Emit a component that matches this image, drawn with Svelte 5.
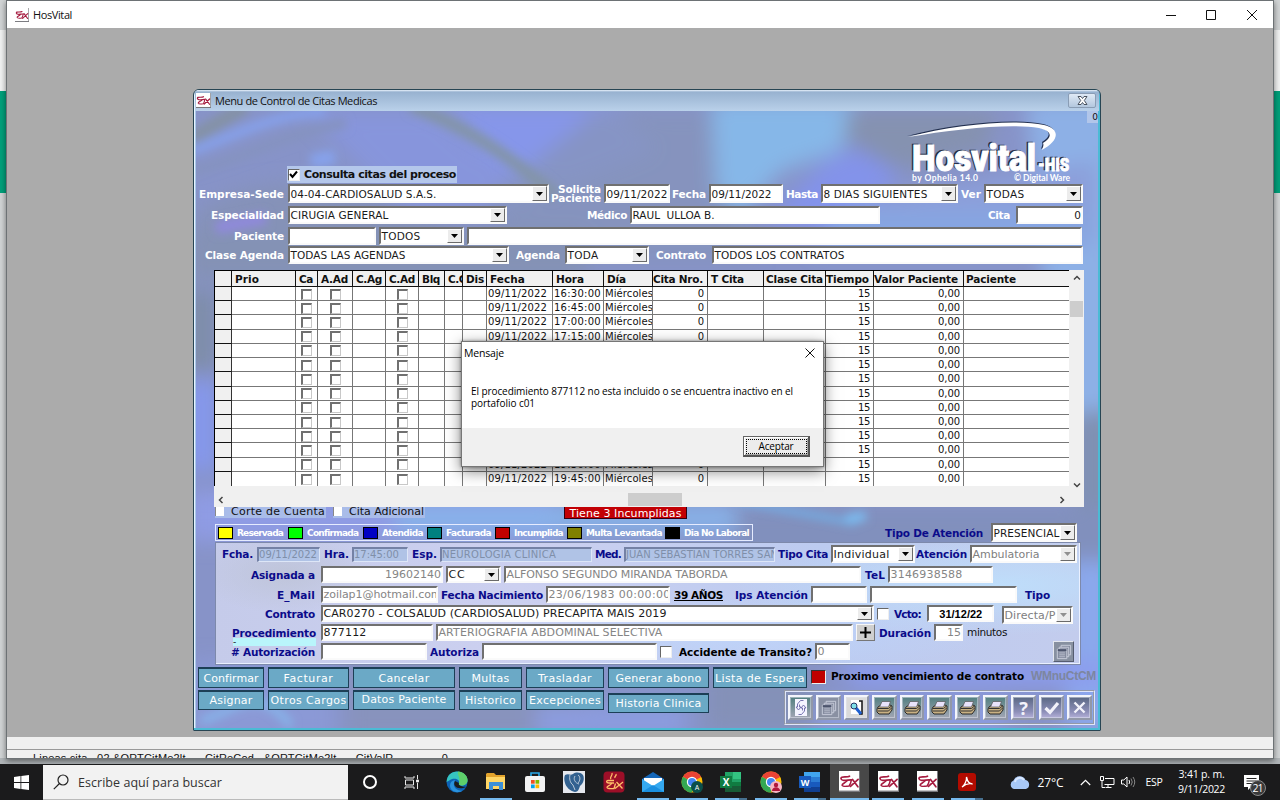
<script>
  // Spreads the letters of a label so that it occupies the given width.
  function fit(node, width) {
    if (!width) return;
    const natural = node.getBoundingClientRect().width;
    const count = node.textContent.length;
    if (count) node.style.letterSpacing = (width - natural) / count + 'px';
  }

  const times = Array.from({ length: 14 }, (_, i) => {
    const m = 16 * 60 + 30 + i * 15;
    return Math.floor(m / 60) + ':' + String(m % 60).padStart(2, '0') + ':00';
  });
  const heads = [['', 0], ['Prio', 24], ['Ca', 14], ['A.Ad', 27], ['C.Ag', 26], ['C.Ad', 26], ['Blq', 18], ['C.C', 18], ['Dis', 18], ['Fecha', 35], ['Hora', 28], ['Día', 19], ['Cita Nro.', 50], ['T Cita', 33], ['Clase Cita', 57], ['Tiempo', 43], ['Valor Paciente', 84], ['Paciente', 50]];
  const legend = [['Reservada', '#ffff00', 46, 'reservada'], ['Confirmada', '#00ff00', 51, 'confirmada'], ['Atendida', '#0000c4', 41, 'atendida'], ['Facturada', '#008080', 45, 'facturada'], ['Incumplida', '#c00000', 49, 'incumplida'], ['Multa Levantada', '#808000', 76, 'multa'], ['Dia No Laboral', '#000000', 65, 'festivo']];
  const top = [['Confirmar', 55], ['Facturar', 50], ['Cancelar', 51], ['Multas', 38], ['Trasladar', 54], ['Generar abono', 86], ['Lista de Espera', 90]];
  const bottom = [['Asignar', 43], ['Otros Cargos', 76], ['Datos Paciente', 85], ['Historico', 51], ['Excepciones', 72], ['Historia Clinica', 86]];
  const tools = ['refresh', 'copy', 'find', 'print', 'print', 'print', 'print', 'print', 'help', 'ok', 'no'];
  const apps = ['edge', 'folder', 'store', 'pg', 'gxred', 'mail', 'chromeA', 'excel', 'chromeP', 'word', 'gx', 'gx', 'gx', 'pdf'];
  const running = [0, 1, 0, 0, 0, 1, 1, 2, 1, 2, 1, 1, 1, 2];
</script>

{#snippet t(text, w)}<span class="t" use:fit={w}>{text}</span>{/snippet}
{#snippet label(text, w, cls = '')}<div class="label {cls}">{@render t(text, w)}</div>{/snippet}
{#snippet field(text, w, cls = '')}<div class="field {cls}">{@render t(text, w)}</div>{/snippet}
{#snippet combo(text, w, cls = '')}
  <div class="field combo {cls}">{@render t(text, w)}<span class="drop"><svg width="7" height="4"><path d="M0 0h7L3.5 4z" fill="currentColor" /></svg></span></div>
{/snippet}
{#snippet gx(size)}
  <svg width={size} height={size} viewBox="0 0 22 22">
    <rect width="22" height="22" fill="#77777c" /><rect width="21" height="20.5" fill="#fff" />
    <g fill="none" stroke="#a61c40" stroke-linejoin="round" stroke-linecap="round">
      <path d="M11 5.500C9 6.800 5 5.800 3 6.500 1.300 7.200 2 9.700 5 9.900c3 .2 5-.6 8-.5" stroke-width="1.800" />
      <path d="M8.500 10.300C6.500 12.500 3 13.300 3.200 14.900c.3 1.500 4.300 1.300 7.300.9 1.500-1.500 2-3.500 2.400-6.200" stroke-width="1.600" />
      <path d="M14.200 8.800l5.600 7.700M20 8.800l-8 7.400" stroke-width="1.800" />
    </g>
  </svg>
{/snippet}
{#snippet copy()}
  <svg width="20" height="20" viewBox="0 0 20 20">
    <g fill="#858c9f" stroke="#c9cddb" stroke-width="1"><path d="M7.500 3.500h10v10h-10z" /><path d="M5.500 5.500h10v10h-10z" /><path d="M3.500 7.500h10v10h-10z" /></g>
    <path d="M4 8.500h9" stroke="#4c546c" stroke-width="2" /><path d="M5.500 11.500h6M5.500 13.500h6M5.500 15.500h6" stroke="#b8bdcc" />
  </svg>
{/snippet}
{#snippet chrome()}
  <circle cx="11" cy="11" r="10.500" fill="#fbbc05" />
  <path d="M11 11L1.900 5.700A10.500 10.500 0 0 1 20.100 5.700z" fill="#ea4335" />
  <path d="M11 11L1.900 5.700A10.500 10.500 0 0 0 10.500 21.500L15 13z" fill="#34a853" />
  <path d="M11 5.700h9.100L11 11z" fill="#ea4335" />
  <circle cx="11" cy="11" r="5.200" fill="#fff" /><circle cx="11" cy="11" r="4" fill="#4285f4" />
{/snippet}

<div class="desktop">
  <div class="edge"><i></i><b></b></div>
  <div class="app">
    <header class="titlebar">
      {@render gx(14)}
      <span class="name">{@render t('HosVital', 39)}</span>
      <svg class="winbtns" width="92" height="12" viewBox="0 0 92 12" fill="none" stroke="#111"><path d="M1 6.500h10" /><path d="M41.500 1.500h9v9h-9z" /><path d="M82 1l10 10M92 1L82 11" /></svg>
    </header>
    <div class="mdi"></div>
    <div class="status"></div>
    <div class="status low"><span class="ghost">{@render t('Lineas cita   02 &ORTCitMe2lt      CitReCod   &ORTCitMe2lt      CitValR               0', 415)}</span></div>
  </div>

  <div class="win">
    <header class="wintitle">
      {@render gx(15)}
      <span>{@render t('Menu de Control de Citas Medicas', 162)}</span>
      <span class="close"><svg width="11" height="9" viewBox="0 0 11 9"><path d="M1 .5h3l1.500 2 1.500-2h3L7.300 4.500 10 8.500H7l-1.500-2-1.500 2H1l2.700-4z" fill="#fff" stroke="#4a5360" /></svg></span>
    </header>

    <div class="content">
      <svg class="bg" width="903" height="618" viewBox="0 0 903 618">
        <defs><filter id="soft" x="-30%" y="-30%" width="160%" height="160%"><feGaussianBlur stdDeviation="10" /></filter><filter id="thin" x="-30%" y="-30%" width="160%" height="160%"><feGaussianBlur stdDeviation="5" /></filter></defs>
        <rect width="903" height="618" fill="#8793c8" />
        <g filter="url(#soft)">
          <path d="M0 100C100 40 200 90 330 150H0z" fill="#8592b8" />
          <path d="M110 0h130l100 90-130 10z" fill="#8795dc" />
          <path d="M250-5h170l40 45-90 35-70-20z" fill="#8696ea" />
          <path d="M400 0h120l40 150H330l-40-60z" fill="#8693bb" opacity=".8" />
          <path d="M515-10h145l-15 50-60 20-40 45-25-25z" fill="#86b7e8" />
          <path d="M570 110l60-60 60-25 20 30-60 70z" fill="#8393ea" />
          <path d="M650 0h150l-10 40-90 20-50-30z" fill="#8592b0" />
          <path d="M830-10h90v320h-60z" fill="#8db0e6" />
          <path d="M660 90l240-40v80H640z" fill="#8c9fda" />
          <path d="M640 100h250v40H620z" fill="#86a6e2" />
          <path d="M-10 120h400v50H-10z" fill="#8492b5" />
          <path d="M-10 180h30v80h-30z" fill="#7e8da8" /><path d="M-10 270h30v90h-30z" fill="#8598ee" />
          <path d="M880 300h40v130h-40z" fill="#7f91b2" />
          <path d="M-10 380h370v50H-10z" fill="#8f9be4" />
          <path d="M200 395h340v25H200z" fill="#87b4ea" />
          <path d="M540 395h400v70H540z" fill="#8190bd" />
          <path d="M870 450h50v170h-50z" fill="#8ba8ec" />
          <path d="M-10 550h150v80H-10z" fill="#8b99d6" /><path d="M150 550h240v80H150z" fill="#8893bd" />
          <path d="M640 550h270v25H660z" fill="#8c9cee" /><path d="M510 560h110v60H510z" fill="#8491b8" />
          <path d="M340 595h150v30H340zM620 590h190v30H620z" fill="#8c9ce0" />
        </g>
        <g filter="url(#thin)" fill="none">
          <path d="M-5 28L50-5" stroke="#8492a6" stroke-width="14" />
          <path d="M-5 40C40 25 70 5 130 0" stroke="#86a0ea" stroke-width="10" />
          <path d="M-5 60C40 52 80 25 150 12" stroke="#8593c0" stroke-width="10" />
          <path d="M215-5C270 15 320 50 360 85" stroke="#8394a8" stroke-width="12" />
          <path d="M115 50l24-4" stroke="#86a2ec" stroke-width="14" />
          <path d="M20 117l50-10" stroke="#9089dd" stroke-width="12" />
          <path d="M540 390l120 22" stroke="#6fb4ec" stroke-width="5" /><path d="M650 408l20-3" stroke="#7cbdf2" stroke-width="9" />
          <path d="M5 610c35-10 55-40 90 5" stroke="#86b7ec" stroke-width="7" />
        </g>
      </svg>
      <span class="zero">0</span>

      <div class="head">
        <div class="consult"><i class="box on"><svg width="9" height="9" viewBox="0 0 9 9"><path d="M1 4l2.500 3L8 1.500" fill="none" stroke="#000" stroke-width="2" /></svg></i>{@render t('Consulta citas del proceso', 152)}</div>
        <svg class="logo" width="176" height="66" viewBox="0 0 176 66">
          <path d="M2 17C50 4 110-1 138 5c17 4 15 16-2 25 1-3 2-5 1-7 10-6 9-12-4-15C105 3 50 9 2 17z" fill="#23304f" transform="translate(-1 -1)" />
          <path d="M2 17C50 4 110-1 138 5c17 4 15 16-2 25 1-3 2-5 1-7 10-6 9-12-4-15C105 3 50 9 2 17z" fill="#fff" />
          <g font-family="Roboto, sans-serif" font-weight="900">
            <g fill="#1c2740" stroke="#1c2740" stroke-width=".7" transform="translate(-1.500 -1.500)"><text x="6" y="51" font-size="37" textLength="124" lengthAdjust="spacingAndGlyphs">Hosvital</text><text x="132" y="51" font-size="18.500" textLength="31" lengthAdjust="spacingAndGlyphs">-HIS</text></g>
            <g fill="#fff" stroke="#fff" stroke-width=".9"><text x="6" y="51" font-size="37" textLength="124" lengthAdjust="spacingAndGlyphs">Hosvital</text><text x="132" y="51" font-size="18.500" textLength="31" lengthAdjust="spacingAndGlyphs">-HIS</text></g>
          </g>
          <g font-family="Lato, sans-serif" font-weight="700" font-size="8.500" fill="#fff"><text x="6" y="61" textLength="66">by Ophelia 14.0</text><text x="108" y="61" textLength="56">© Digital Ware</text></g>
        </svg>
      </div>

      <div class="row ra">
        {@render label('Empresa-Sede', 85)}{@render combo('04-04-CARDIOSALUD S.A.S.', 146)}
        <div class="label two">{@render t('Solicita', 43)}{@render t('Paciente', 50)}</div>
        {@render field('09/11/2022', 61)}{@render label('Fecha', 34)}{@render field('09/11/2022', 60)}{@render label('Hasta', 32)}
        {@render combo('8 DIAS SIGUIENTES', 104)}{@render label('Ver', 20)}{@render combo('TODAS', 38)}
      </div>
      <div class="row rb">
        {@render label('Especialidad', 73)}{@render combo('CIRUGIA GENERAL', 98)}{@render label('Médico', 40)}{@render field('RAUL  ULLOA B.', 82)}{@render label('Cita', 22, 'pad')}{@render field('0', 0, 'num')}
      </div>
      <div class="row rc">
        {@render label('Paciente', 50)}{@render field('', 0)}{@render combo('TODOS', 39)}{@render field('', 0)}
      </div>
      <div class="row rd">
        {@render label('Clase Agenda', 79)}{@render combo('TODAS LAS AGENDAS', 115)}{@render label('Agenda', 44, 'pad2')}{@render combo('TODA', 31)}{@render label('Contrato', 50, 'pad')}{@render field('TODOS LOS CONTRATOS', 130)}
      </div>

      <div class="tablebox">
        <div class="grid">
          <div class="tr th">{#each heads as h}<div>{@render t(h[0], h[1])}</div>{/each}</div>
          {#each times as time}
            <div class="tr">
              <div class="sel"></div><div></div><div class="mid"><i class="cb"></i></div><div class="mid"><i class="cb"></i></div><div></div><div class="mid"><i class="cb"></i></div><div></div><div></div><div></div>
              <div>{@render t('09/11/2022', 59)}</div><div>{@render t(time, 47)}</div><div>{@render t('Miércoles', 48)}</div>
              <div class="r">0</div><div></div><div></div><div class="r">{@render t('15', 12)}</div><div class="r wide">{@render t('0,00', 22)}</div><div></div>
            </div>
          {/each}
        </div>
        <div class="vs"><svg width="8" height="6" viewBox="0 0 8 6"><path d="M1 4.500l3-3 3 3" /></svg><span></span><svg width="8" height="6" viewBox="0 0 8 6"><path d="M1 1.500l3 3 3-3" /></svg></div>
        <div class="hs"><svg width="6" height="8" viewBox="0 0 6 8"><path d="M4.500 1l-3 3 3 3" /></svg><span></span><svg width="6" height="8" viewBox="0 0 6 8"><path d="M1.500 1l3 3-3 3" /></svg></div>
      </div>

      <div class="cut">
        <div class="chk"><i></i>{@render t('Corte de Cuenta', 94)}</div>
        <div class="chk second"><i></i>{@render t('Cita Adicional', 75)}</div>
        <div class="red">{@render t('Tiene 3 Incumplidas', 112)}</div>
      </div>

      <div class="legendrow">
        <div class="legend">{#each legend as l}<div class="lg {l[3]}"><i style="background:{l[1]}"></i>{@render t(l[0], l[2])}</div>{/each}</div>
        {@render label('Tipo De Atención', 98, 'navy far')}
        {@render combo('PRESENCIAL', 66)}
      </div>

      <div class="panel">
        <div class="row f1">
          {@render label('Fcha.', 31, 'navy')}{@render field('09/11/2022', 58, 'off')}{@render label('Hra.', 25, 'navy')}{@render field('17:45:00', 45, 'off')}{@render label('Esp.', 25, 'navy')}{@render field('NEUROLOGIA CLINICA', 114, 'off')}{@render label('Med.', 26, 'navy')}{@render field('JUAN SEBASTIAN TORRES SAN', 152, 'off')}{@render label('Tipo Cita', 50, 'navy')}{@render combo('Individual', 56, 'big')}{@render label('Atención', 51, 'navy')}{@render combo('Ambulatoria', 67, 'big dis')}
        </div>
        <div class="row f2">
          {@render label('Asignada a', 64, 'navy pad')}{@render field('19602140', 56, 'dim num big')}{@render combo('CC', 17, 'big')}{@render field('ALFONSO SEGUNDO MIRANDA TABORDA', 221, 'dim big')}{@render label('TeL', 20, 'navy')}{@render field('3146938588', 72, 'dim big')}
        </div>
        <div class="row f3">
          {@render label('E_Mail', 38, 'navy pad')}{@render field('zoilap1@hotmail.com', 118, 'dim big')}{@render label('Fecha Nacimiento', 102, 'navy')}{@render field('23/06/1983 00:00:00', 122, 'dim big')}{@render label('39 AÑOS', 49, 'age')}{@render label('Ips Atención', 73, 'navy')}{@render field('', 0)}{@render field('', 0)}{@render label('Tipo', 25, 'navy')}
        </div>
        <div class="row f4">
          {@render label('Contrato', 50, 'navy pad')}{@render combo('CAR0270 - COLSALUD (CARDIOSALUD) PRECAPITA MAIS 2019', 343, 'big')}<i class="box"></i>{@render label('Vcto:', 27, 'navy pad')}{@render field('31/12/22', 43, 'date')}{@render combo('Directa/P', 51, 'big dis shift')}
        </div>
        <div class="row f5">
          {@render label('Procedimiento', 84, 'navy pad2')}{@render field('877112', 43, 'big')}{@render field('ARTERIOGRAFIA ABDOMINAL SELECTIVA', 224, 'dim big')}
          <div class="plus"><svg width="13" height="13"><path d="M6.500 1v11M1 6.500h11" stroke="#000" stroke-width="2" /></svg></div>
          {@render label('Duración', 52, 'navy')}{@render field('15', 14, 'dim num big')}<div class="min">{@render t('minutos', 40)}</div>
        </div>
        <div class="row f6">
          <span class="cyan">-</span>
          {@render label('# Autorización', 84, 'navy pad')}{@render field('', 0)}{@render label('Autoriza', 49, 'navy')}{@render field('', 0)}<i class="box"></i>{@render label('Accidente de Transito?', 133, 'blk')}{@render field('0', 0, 'dim big')}
          <div class="copy">{@render copy()}</div>
        </div>
      </div>

      <div class="foot">
        <div class="btns">
          {#each top as b}<button>{@render t(b[0], b[1])}</button>{/each}
          <i class="redbox"></i><div class="next">{@render t('Proximo vencimiento de contrato', 193)}</div><div class="code">{@render t('WMnuCtCM', 65)}</div>
        </div>
        <div class="btns lower">
          {#each bottom as b}<button>{@render t(b[0], b[1])}</button>{/each}
          <div class="toolbar">
            {#each tools as k}
              <span class="tool {k}">
                {#if k === 'refresh'}<svg width="19" height="19" viewBox="0 0 19 19"><rect x="4" y="1" width="12" height="17" fill="#f4f4ff" /><path d="M12.500 2.500H9.500L6.500 6v3H5l2.500 3L10 9H8.500V6.500M7.500 16.500h3l3-3.500v-3H15l-2.500-3L10 10h1.500v2.500" fill="none" stroke="#6a66a8" stroke-width=".9" /></svg>
                {:else if k === 'copy'}{@render copy()}
                {:else if k === 'find'}<svg width="19" height="19" viewBox="0 0 19 19"><path d="M4 2h11v14H4z" fill="#fff" /><path d="M12 3h3v13h-3" fill="none" stroke="#111" stroke-width="1.500" /><path d="M9 10l5 6" stroke="#1d5fd0" stroke-width="3" /><circle cx="7" cy="8" r="3" fill="#7fe0e8" stroke="#236" /></svg>
                {:else if k === 'print'}<svg width="19" height="19" viewBox="0 0 19 19"><path d="M3 9l3-2h9l2 1v4l-3 4H4l-2-2v-3z" fill="#c9b183" stroke="#2a2a2a" /><path d="M7 3.500h8.500L13.500 9h-9z" fill="#e9e3fb" stroke="#555" stroke-width=".7" /><path d="M3 10.500h10.500l3-2.500M3 13h10.500l3-3" fill="none" stroke="#333" /></svg>
                {:else if k === 'help'}<span class="q">?</span>
                {:else if k === 'ok'}<svg width="19" height="19" viewBox="0 0 19 19"><path d="M3.500 10l4.500 4.500L16 5" fill="none" stroke="#f2f2fa" stroke-width="3.200" /></svg>
                {:else}<svg width="19" height="19" viewBox="0 0 19 19"><path d="M4.500 4.500l10 10M14.500 4.500l-10 10" stroke="#f2f2fa" stroke-width="2.400" /></svg>{/if}
              </span>
            {/each}
          </div>
        </div>
      </div>
    </div>
  </div>

  <div class="dialog">
    <header><span>{@render t('Mensaje', 40)}</span><svg width="10" height="10" viewBox="0 0 10 10"><path d="M.5.5l9 9M9.500.5l-9 9" stroke="#111" fill="none" /></svg></header>
    <p>{@render t('El procedimiento 877112 no esta incluido o se encuentra inactivo en el', 322)}{@render t('portafolio c01', 64)}</p>
    <footer><button>{@render t('Aceptar', 35)}</button></footer>
  </div>

  <div class="taskbar">
    <div class="start"><svg width="15" height="15" viewBox="0 0 15 15"><path d="M0 2l6.500-.9v6H0zM7.300 1L15 0v7.100H7.300zM0 7.900h6.500v6L0 13zM7.300 7.900H15V15l-7.700-1z" fill="#fff" /></svg></div>
    <div class="search"><svg width="16" height="16" viewBox="0 0 16 16" fill="none" stroke="#222" stroke-width="1.200"><circle cx="10" cy="6" r="5" /><path d="M6.500 9.500L.8 15.200" /></svg>{@render t('Escribe aquí para buscar', 144)}</div>
    <div class="sys"><svg width="16" height="16" viewBox="0 0 16 16"><circle cx="8" cy="8" r="6" fill="none" stroke="#fff" stroke-width="2" /></svg></div>
    <div class="sys view"><svg width="16" height="15" viewBox="0 0 16 15" fill="none" stroke="#e8e8e8"><path d="M1 1v2h9V1M1 14v-2h9v2M1.500 5h8v5h-8zM13.500 0v4M13.500 8v6" /><path d="M12.500 5h2v2h-2z" fill="#fff" /></svg></div>
    <div class="apps">
      {#each apps as a, i}
        <div class="cell" class:active={i === 10} class:run={running[i] > 0} class:multi={running[i] === 2}>
          {#if a === 'gx'}{@render gx(21)}
          {:else}
            <svg width="22" height="22" viewBox="0 0 22 22">
              {#if a === 'edge'}
                <circle cx="11" cy="11" r="10.500" fill="#0c62b5" /><path d="M.6 11C1 4 5.500.5 11 .5c6 0 10.500 4.200 10.500 8.500 0 4-3 5.500-6 5.500-2 0-3-1-2.500-2.200 1.500-4-5-6-9-3.300C2.300 9.800 1.100 11 .6 11z" fill="#36c4c0" /><path d="M12 .6c6 .5 9.500 4.500 9.500 8.400 0 4-3 5.500-6 5.500-2 0-3-1-2.500-2.200C15 7.500 11 4 12 .6z" fill="#5ed06a" /><path d="M8 12c-1 5 4 8.500 9 7.500-7 4-13 0-13-5 0-3 2-5 5-5.500z" fill="#2a92dc" /><path d="M9 10c-3 5 3 9.500 11 6-2-.3-9-1-7-4z" fill="#1c1c1c" />
              {:else if a === 'folder'}
                <path d="M2 2h7l2 2h9v14H1V3z" fill="#e3a32c" /><path d="M1 6h19v12H1z" fill="#ffd665" /><path d="M4 19v-8h14v8h-4v-4H8v4z" fill="#3c8fd6" />
              {:else if a === 'store'}
                <path d="M7 5V2h8v3" fill="none" stroke="#29a8e8" stroke-width="1.600" /><rect x="1" y="5" width="20" height="16" rx="2" fill="#f3f3f3" /><path d="M7 9h3.700v3.700H7z" fill="#f05024" /><path d="M11.500 9h3.700v3.700h-3.700z" fill="#7fba00" /><path d="M7 13.500h3.700v3.700H7z" fill="#00a3ee" /><path d="M11.500 13.500h3.700v3.700h-3.700z" fill="#ffb800" />
              {:else if a === 'pg'}
                <rect width="22" height="22" fill="#e5e8ee" /><path d="M2 4c4-2 5 1 8-1s7-2 10 1c2 4 0 9-3 11-1 3-2 6-5 6-5-1-9-5-10-9-1-3-1-6 0-8z" fill="#326190" /><path d="M7 4c-1 3 0 8 3 10l2 5M12 5c-2 3 0 7 4 8M15 4c3 2 2 6 0 8" fill="none" stroke="#c7d3df" stroke-width=".9" />
              {:else if a === 'gxred'}
                <rect x=".5" y=".5" width="21" height="21" rx="4" fill="#9c0f28" /><path d="M11 9.500H5c-2 0-2 2.500 1 2.500h5M9 12c-2 3-5 3-5 4.500s5 1 7 1l1.500-5M13.500 11l6 6.500M20 11l-8 6.500M8 8c-2-2 2-3 1-6M12 7c-1-2 2-2 1-4" fill="none" stroke="#ffc06a" stroke-width="1.300" />
              {:else if a === 'mail'}
                <path d="M0 8l11-7 11 7v12H0z" fill="#1466b8" /><path d="M2 7h18v8H2z" fill="#fff" /><path d="M0 8l11 7L22 8v13H0z" fill="#35a9f0" /><path d="M0 21l11-7 11 7z" fill="#1a8fe0" />
              {:else if a === 'chromeA'}
                {@render chrome()}<circle cx="16" cy="16" r="6" fill="#0b4f4a" /><text x="16" y="18.500" font-size="7" fill="#fff" text-anchor="middle" font-family="Roboto, sans-serif">A</text>
              {:else if a === 'chromeP'}
                {@render chrome()}<circle cx="16" cy="16" r="6" fill="#f6b6c4" /><circle cx="16" cy="14" r="2.200" fill="#b0183c" /><path d="M12 20c0-5 8-5 8 0z" fill="#b0183c" />
              {:else if a === 'excel'}
                <path d="M5 1h16v20H5z" fill="#21a366" /><path d="M13 1h8v7h-8z" fill="#33c481" /><path d="M5 11h16v10H5z" fill="#107c41" /><path d="M5 15h16v6H5z" fill="#185c37" /><rect y="5" width="12" height="12" fill="#107c41" /><text x="6" y="14.500" font-size="10" font-weight="700" fill="#fff" text-anchor="middle" font-family="Open Sans, sans-serif">X</text>
              {:else if a === 'word'}
                <path d="M5 1h16v5H5z" fill="#41a5ee" /><path d="M5 6h16v5H5z" fill="#2b7cd3" /><path d="M5 11h16v5H5z" fill="#185abd" /><path d="M5 16h16v5H5z" fill="#103f91" /><rect y="5" width="12" height="12" fill="#185abd" /><text x="6" y="14.500" font-size="9" font-weight="700" fill="#fff" text-anchor="middle" font-family="Open Sans, sans-serif">W</text>
              {:else}
                <rect x="2" y="2" width="18" height="18" rx="3" fill="#b30b00" /><path d="M6 16c2-1 5-6 4.500-10 1 5 3 7 6 7-3-1-7 0-10.500 3z" fill="none" stroke="#fff" stroke-width="1.300" />
              {/if}
            </svg>
          {/if}
        </div>
      {/each}
    </div>
    <div class="tray">
      <svg class="cloud" width="22" height="15" viewBox="0 0 22 15"><path d="M5 14a4.500 4.500 0 0 1-.5-8.500A6.500 6.500 0 0 1 16.500 5 4.700 4.700 0 0 1 17 14z" fill="#a8c8f6" /><path d="M6 7a5 5 0 0 1 9-2" fill="none" stroke="#d8e7ff" stroke-width="2" /></svg>
      <span class="temp">{@render t('27°C', 26)}</span>
      <svg class="chev" width="11" height="7" viewBox="0 0 11 7"><path d="M.8 6l4.700-4.700L10.200 6" fill="none" stroke="#fff" stroke-width="1.200" /></svg>
      <svg class="net" width="15" height="13" viewBox="0 0 15 13" fill="none" stroke="#fff"><path d="M5 2.500h9v6H4.500M8 9v2.500M5.500 11.500h6M.5.5h3v4h-3zM2 5v6.500h3" /></svg>
      <svg class="vol" width="15" height="12" viewBox="0 0 15 12" fill="none" stroke="#fff"><path d="M.5 4v4h2.300L6 11V1L2.800 4z" /><path d="M8 4q1.200 2 0 4" /><path d="M10 2.500q2.500 3.500 0 7M12 1q3.500 5 0 10" stroke="#888" /></svg>
      <span class="esp">{@render t('ESP', 17)}</span>
      <div class="clock"><span>{@render t('3:41 p. m.', 46)}</span><span>{@render t('9/11/2022', 47)}</span></div>
      <svg class="note" width="24" height="22" viewBox="0 0 24 22"><path d="M1 1h15v12H8l-3 3v-3H1z" fill="#fff" /><path d="M3.500 4.500h10M3.500 7h10M3.500 9.500h7" stroke="#222" /><circle cx="15" cy="14" r="7.500" fill="#3a3a3a" stroke="#8a8a8a" /><text x="15" y="17.800" font-size="10.500" fill="#fff" text-anchor="middle" textLength="11" font-family="Open Sans, sans-serif">21</text></svg>
    </div>
  </div>
</div>

<style>
  :global(body) { margin: 0; overflow: hidden; }
  .desktop { position: relative; width: 1280px; height: 800px; overflow: hidden; background: #b1b6b9; font-family: "DejaVu Sans", sans-serif; font-size: 11px; color: #111; }
  .desktop * { box-sizing: border-box; }
  i { display: block; font-style: normal; }
  svg { display: block; flex: none; }
  .t { display: inline-block; white-space: pre; flex: none; }
  .edge { position: absolute; inset: 0 0 42px; display: flex; flex-direction: column; background: #d2d5d6; }
  .edge i { margin-top: 30px; height: 61px; background: #f2f3f3; }
  .edge b { height: 102px; background: #00a17b; }

  .app { position: absolute; left: 6px; top: 0; width: 1268px; height: 759px; display: flex; flex-direction: column; border: 1px solid #6d7275; box-shadow: 0 2px 6px rgba(0,0,0,.5); background: #ababab; }
  .titlebar { height: 27px; flex: none; background: #fff; display: flex; align-items: center; padding-left: 8px; font: 11px "Open Sans", sans-serif; }
  .titlebar .name { margin-left: 4px; }
  .winbtns { margin-left: auto; margin-right: 16px; }
  .mdi { flex: 1; }
  .status { height: 12px; flex: none; background: #f0f0f0; }
  .status.low { height: 9px; border-top: 1px solid #999; padding-left: 26px; overflow: hidden; }
  .ghost { display: block; font: 11px/13px "Liberation Sans", sans-serif; margin-top: 2px; }

  .win { position: absolute; left: 193px; top: 89px; width: 908px; height: 642px; border: 1px solid #274553; border-radius: 6px 6px 1px 1px; background: #a9c8ea; overflow: hidden; display: flex; flex-direction: column; padding: 0 1px 0 2px; box-shadow: inset -2px -2px #4bbbd5, inset 1px 1px #e7f3ff; }
  .wintitle { height: 21px; flex: none; margin: 0 0 0 -1px; display: flex; align-items: center; padding: 0 1px; background: linear-gradient(#eaf3fc 0, #98b2d0 2px, #bad1ea 100%); font: 11px "Open Sans", sans-serif; }
  .wintitle span:not(.close) { margin-left: 2px; }
  .close { margin-left: auto; margin-right: 2px; width: 28px; height: 15px; border: 1px solid #8a9db5; border-radius: 2px; background: linear-gradient(#dfe9f5, #b3c7de); display: flex; align-items: center; justify-content: center; }
  .content { position: relative; z-index: 0; flex: 1; margin: 0 1px 2px 0; overflow: hidden; display: flex; flex-direction: column; }
  .bg { position: absolute; left: 0; top: 0; z-index: -1; }
  .zero { position: absolute; right: 0; top: 0; width: 11px; height: 12px; background: #b2c6ea; font-size: 9px; line-height: 12px; text-align: right; }
  .head { height: 73px; flex: none; display: flex; justify-content: space-between; align-items: flex-end; padding: 0 16px 1px 91px; }
  .consult { width: 170px; height: 17px; background: #b4c7eb; display: flex; align-items: center; gap: 4px; font-weight: 700; padding-left: 1px; }
  .logo { align-self: flex-start; margin-top: 9px; overflow: visible; }
  .box { width: 12px; height: 12px; background: #fff; border: 1px solid #666; border-color: #666 #eee #eee #666; align-self: center; }
  .row { display: grid; column-gap: 3px; height: 18px; flex: none; align-items: stretch; }
  .ra { grid-template-columns: 89px 261px 49px 66px 33px 74px 32px 137px 20px 99px; height: 19px; }
  .rb { grid-template-columns: 89px 219px 117px 250px 130px 67px; margin-top: 3px; }
  .rc { grid-template-columns: 89px 88px 85px 615px; margin-top: 3px; height: 18px; }
  .rd { grid-template-columns: 89px 221px 50px 84px 57px 371px; margin-top: 1px; }
  .label { display: flex; align-items: center; justify-content: flex-end; font-weight: 700; color: #fff; white-space: nowrap; font-size: 10.500px; }
  .label:first-child { padding-right: 1px; }
  .label.two { flex-direction: column; align-items: flex-end; justify-content: center; line-height: 9px; padding: 0; }
  .label.pad { padding-right: 3px; }
  .label.pad2 { padding-right: 2px; }
  .label.far { padding-right: 6px; }
  .label.navy { color: #0b0b8a; }
  .label.blk, .label.age { color: #000; }
  .label.age .t { text-decoration: underline; }
  .field { min-width: 0; overflow: hidden; background: #fff; border: 2px solid; border-color: #707070 #fafafa #fafafa #707070; padding-left: 0.500px; display: flex; align-items: center; font-size: 10.500px; color: #1a1a1a; }
  .field.num { justify-content: flex-end; padding-right: 0; }
  .field.dim { color: #858585; }
  .field.big { font-size: 11px; }
  .field.off { background: #b0c3e6; color: #7f8fa9; font-size: 10px; height: 15px; align-self: center; border-color: #7481a5 #dde6f7 #dde6f7 #7481a5; border-width: 2px 1px 1px 2px; padding-left: 0; }
  .field.dis { color: #808080; }
  .field.date { justify-content: center; font: 700 11px "Liberation Sans", sans-serif; color: #000; }
  .field.shift { margin-left: 5px; margin-top: 1px; margin-bottom: -2px; }
  .drop { margin-left: auto; position: relative; z-index: 1; width: 15px; align-self: stretch; background: #ececec; border: 1px solid; border-color: #fff #6a6a6a #6a6a6a #fff; display: flex; align-items: center; justify-content: center; color: #000; flex: none; }
  .dis .drop { color: #909090; }

  .tablebox { flex: none; margin: 6px 0 0 18px; width: 870px; height: 237px; background: #f0f0f0; display: grid; grid-template-columns: 855px 15px; grid-template-rows: 222px 15px; }
  .grid { display: grid; height: 216px; grid-template-rows: 16px repeat(14, minmax(0, 1fr)); background: #fff; border-left: 1px solid #000; border-top: 1px solid #000; }
  .tr { display: grid; grid-template-columns: 17px 64px 22px 35px 33px 33px 26px 18px 24px 66px 51px 49px 55px 56px 62px 48px 90px 105px; min-height: 0; font-size: 10px; line-height: 13.500px; }
  .tr > div { min-width: 0; overflow: hidden; border-right: 1px solid #777; border-bottom: 1px solid #777; padding-left: 1px; }
  .tr > div:last-child { border-right: 0; }
  .tr:last-child > div { border-bottom: 0; }
  .tr.th > div { background: #f0f0f0; font-weight: 700; font-size: 10.500px; border-color: #111; padding-left: 3px; line-height: 16px; }
  .tr.th > div:nth-child(13), .tr.th > div:nth-child(16), .tr.th > div:nth-child(17) { padding-left: 0; }
  .tr.th > div:nth-child(15), .tr.th > div:nth-child(18) { padding-left: 2px; }
  .tr > .sel { background: #f0f0f0; border-color: #111; border-right-color: #333; }
  .tr > .r { text-align: right; padding-right: 3px; }
  .tr > .mid { display: flex; justify-content: center; align-items: center; padding: 1px 0 0; }
  .cb { width: 11px; height: 11px; border: 1px solid; border-color: #707070 #c8c8c8 #c8c8c8 #707070; border-width: 2px 1px 1px 2px; }
  .vs, .hs { display: flex; align-items: center; }
  .vs svg, .hs svg { fill: none; stroke: #444; stroke-width: 1.500; }
  .vs { flex-direction: column; padding: 5px 0 4px; }
  .vs span { width: 13px; height: 16px; background: #cdcdcd; margin: 20px 0 auto; }
  .hs { grid-column: 1; padding: 0 4px 0 4px; }
  .hs span { width: 54px; height: 13px; background: #cdcdcd; margin: 0 auto 0 404px; }

  .cut { flex: none; height: 12px; overflow: hidden; display: flex; align-items: flex-start; padding-left: 19px; }
  .chk { display: flex; height: 11px; width: 111px; background: #a9bce9; line-height: 10px; gap: 7px; }
  .chk i { width: 9px; height: 9px; background: #fff; border-left: 1px solid #888; }
  .chk.second { width: 92px; margin-left: 7px; }
  .red { margin-left: 139px; width: 123px; height: 12px; background: #c20005; border: 1px solid #301; border-top: 0; color: #fff; text-align: center; line-height: 13px; font-size: 11px; }

  .legendrow { flex: none; margin: 4px 0 0 19px; display: grid; grid-template-columns: 538px 234px 86px; column-gap: 2px; height: 19px; }
  .legend { display: flex; border: 1px solid #e5ebff; margin: 1px 0; align-items: center; color: #fff; font-weight: 700; font-size: 9px; padding-left: 2px; }
  .lg { display: flex; align-items: center; gap: 4px; height: 15px; }
  .lg i { width: 15px; height: 12px; border: 1px solid #000; }
  .reservada { width: 70px; } .confirmada { width: 75px; } .atendida { width: 64px; } .facturada { width: 68px; } .incumplida { width: 72px; } .multa { width: 98px; } .festivo { width: 86px; }

  .panel { flex: none; width: 866px; height: 123px; margin: 0 0 0 19px; border: 1px solid #7d89ab; box-shadow: inset -1px -1px #eaf0ff; background: radial-gradient(ellipse 260px 50px at 90% 35%, rgba(190,224,252,.9), transparent), radial-gradient(ellipse 260px 40px at 60% 75%, rgba(190,212,250,.9), transparent), radial-gradient(ellipse 90px 40px at 8% 25%, rgba(190,196,216,.9), transparent), linear-gradient(90deg, #c5cbea 0, #ccd0f0 35%, #bccbf0 70%, #c3cced 100%); }
  .panel .row { height: 17px; }
  .panel .row.f1 { grid-template-columns: 38px 63px 26px 56px 26px 152px 26px 151px 50px 84px 49px 107px; margin-top: 2px; height: 18px; }
  .f2 { grid-template-columns: 102px 122px 55px 357px 21px 105px; margin-top: 3px; }
  .f3 { grid-template-columns: 102px 117px 102px 124px 50px 82px 56px 147px 30px; margin-top: 3px; }
  .f4 { grid-template-columns: 102px 553px 13px 31px 67px 76px; margin-top: 2px; }
  .f5 { grid-template-columns: 102px 112px 417px 19px 53px 29px 44px; margin-top: 2px; }
  .f6 { position: relative; grid-template-columns: 102px 106px 49px 175px 13px 136px 35px 221px; grid-template-rows: 17px; margin-top: 2px; }
  .cyan { position: absolute; left: 17px; top: -5px; width: 83px; height: 8px; background: #b9f5fb; line-height: 8px; font-size: 9px; }
  .f6 .label { position: relative; }
  .plus { background: #cfcfcf; border: 1px solid; border-color: #f6f6f6 #777 #777 #f6f6f6; display: flex; align-items: center; justify-content: center; }
  .min { font-size: 10.500px; line-height: 17px; padding-left: 1px; }
  .copy { justify-self: end; align-self: center; width: 21px; height: 21px; background: #8790a0; border: 1px solid; border-color: #e4e7ef #555c70 #555c70 #e4e7ef; }
  .copy svg { width: 19px; height: 19px; }

  .foot { flex: none; padding: 2px 0 0 2px; }
  .btns { display: grid; grid-template-columns: 66px 81px 102px 63px 78px 101px 94px 15px 197px 65px; column-gap: 4px; height: 21px; }
  .btns button { font: 11px "DejaVu Sans", sans-serif; color: #fff; background: #6ba9c6; border: 1px solid #1c3f56; border-top-width: 2px; padding: 0; display: flex; align-items: center; justify-content: center; white-space: nowrap; border-radius: 0; }
  .redbox { margin: 3px 0 4px; width: 15px; background: #c00000; border: 1px solid; border-color: #333 #eee #eee #333; }
  .next { font-weight: 700; line-height: 18px; font-size: 10.500px; color: #000; padding-left: 1px; }
  .code { font: 700 12px/18px "Liberation Sans", sans-serif; color: #7d86a0; }
  .lower { margin-top: 2px; height: 36px; }
  .lower button { height: 20px; }
  .lower button:nth-child(3) { padding-bottom: 3px; }
  .lower button:nth-child(6) { margin-top: 3px; }
  .toolbar { grid-column: 7 / -1; justify-self: end; margin: 0 1px 0 0; width: 311px; height: 35px; border: 2px groove #dfe6fa; display: flex; gap: 3px; align-items: center; padding-left: 2px; }
  .tool { width: 24.900px; height: 25px; flex: none; border: 2px solid; border-color: #f3f5fb #9298a8 #9298a8 #f3f5fb; background: linear-gradient(#596783, #8d8fb8 70%, #b4b0d8); display: flex; align-items: center; justify-content: center; outline: 1px solid rgba(225,230,240,.5); outline-offset: -3px; }
  .tool.print, .tool.refresh { background: linear-gradient(#527f80, #a2a6b4); }
  .tool.find { background: #dadada; }
  .tool.copy { background: #8990a2; height: 25px; align-self: center; justify-self: auto; }
  .q { font: 700 18px "Noto Sans", sans-serif; color: #f2f2fa; line-height: 20px; }

  .dialog { position: absolute; left: 461px; top: 341px; width: 363px; height: 126px; background: #fff; border: 1px solid #777; box-shadow: 0 4px 14px rgba(0,0,0,.5), 0 0 3px rgba(0,0,0,.4); display: flex; flex-direction: column; font: 10.500px "Open Sans", sans-serif; color: #000; }
  .dialog header { display: flex; justify-content: space-between; align-items: center; height: 22px; padding: 0 8px 0 2px; }
  .dialog p { margin: 21px 0 0 9px; font-size: 10px; line-height: 12px; height: 43px; display: flex; flex-direction: column; align-items: flex-start; }
  .dialog footer { flex: 1; background: #f0f0f0; display: flex; justify-content: flex-end; align-items: flex-start; padding: 8px 13px 0 0; }
  .dialog button { width: 67px; height: 21px; margin: 0; padding: 0; font: 10px "Open Sans", sans-serif; background: #ececec; border: 1px solid; border-color: #666 #555 #555 #666; border-right-width: 2px; border-bottom-width: 2px; outline: 1px dotted #000; outline-offset: -4px; border-radius: 0; box-shadow: inset 1px 1px #fff, inset -1px -1px #aaa; color: #000; }

  .taskbar { position: absolute; left: 0; bottom: 0; width: 1280px; height: 36px; background: #1b1b1c; display: flex; font-family: "Open Sans", sans-serif; color: #fff; }
  .start { width: 43px; display: flex; align-items: center; justify-content: center; }
  .search { width: 305px; height: 35px; margin: 1px 1px 0 0; background: #f2f2f2; color: #333; font-size: 12.500px; display: flex; align-items: center; gap: 9px; padding-left: 10px; border-bottom: 1px solid #bbb; }
  .sys { width: 42px; display: flex; align-items: center; justify-content: center; }
  .sys.view { padding-left: 1px; width: 45px; margin-right: 1px; padding-right: 4px; }
  .apps { display: grid; grid-template-columns: repeat(14, 39.250px); }
  .cell { display: flex; align-items: center; justify-content: center; border-bottom: 2px solid transparent; border-top: 1px solid transparent; }
  .cell.run { background: linear-gradient(#76b9ed, #76b9ed) 50% 100% / 32px 2px no-repeat border-box; }
  .cell.multi { background: linear-gradient(90deg, #76b9ed 24px, #47708f 24px) 50% 100% / 32px 2px no-repeat border-box; }
  .cell.active { background: linear-gradient(#76b9ed, #76b9ed) 0 100% / 100% 2px no-repeat border-box, #484848 border-box; }
  .tray { flex: 1; display: flex; align-items: center; font-size: 12px; }
  .cloud { margin-left: 22px; }
  .temp { margin-left: 7px; }
  .chev { margin-left: 16px; }
  .net { margin-left: 9px; }
  .vol { margin-left: 6px; }
  .esp { margin-left: 10px; font-size: 10.500px; }
  .clock { margin-left: 14px; display: flex; flex-direction: column; align-items: center; font-size: 10.500px; line-height: 15.500px; width: 50px; }
  .note { margin-left: 16px; margin-top: 5px; }
</style>
